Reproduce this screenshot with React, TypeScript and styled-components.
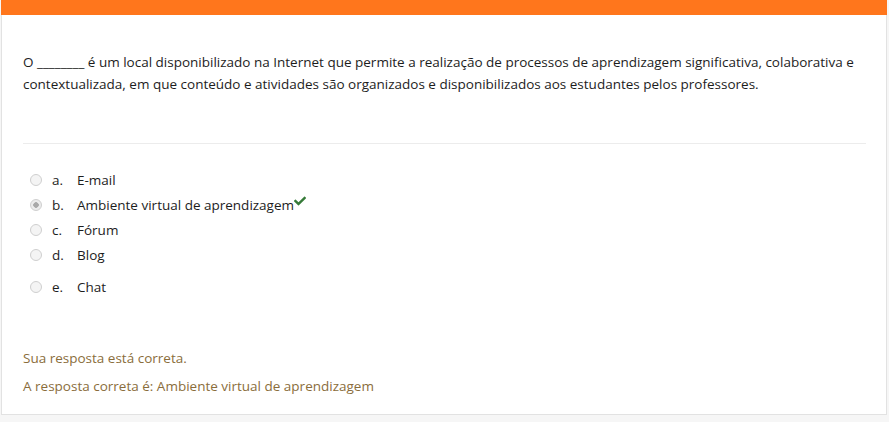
import React from "react";
import styled, { createGlobalStyle } from "styled-components";
import { FaCheck } from "react-icons/fa";

const GlobalStyle = createGlobalStyle`
	body {
		margin: 0;
		background: #f6f6f6;
		font-family: "Open Sans", "Liberation Sans", sans-serif;
		color: #1d1d1d;
	}
`;

interface Option {
	letter: string;
	text: string;
	checked?: boolean;
	correct?: boolean;
}

const options: Option[] = [
	{ letter: "a.", text: "E-mail" },
	{ letter: "b.", text: "Ambiente virtual de aprendizagem", checked: true, correct: true },
	{ letter: "c.", text: "Fórum" },
	{ letter: "d.", text: "Blog" },
	{ letter: "e.", text: "Chat" },
];

export default function App() {
	return (
		<>
			<GlobalStyle />
			<Card>
				<TopBar />
				<Body>
					<Question>
						O ________ é um local disponibilizado na Internet que permite a realização de processos de
						aprendizagem significativa, colaborativa e contextualizada, em que conteúdo e atividades são
						organizados e disponibilizados aos estudantes pelos professores.
					</Question>
					<Divider />
					<Answers>
						{options.map((o, i) => (
							<AnswerRow key={o.letter} $spaced={i === options.length - 1}>
								<Radio $checked={o.checked} />
								<Letter>{o.letter}</Letter>
								<AnswerText>
									{o.text}
									{o.correct && (
										<Tick>
											<FaCheck />
										</Tick>
									)}
								</AnswerText>
							</AnswerRow>
						))}
					</Answers>
					<Feedback>
						<FeedbackLine>Sua resposta está correta.</FeedbackLine>
						<FeedbackLine>A resposta correta é: Ambiente virtual de aprendizagem</FeedbackLine>
					</Feedback>
				</Body>
			</Card>
		</>
	);
}

const Card = styled.div`
	margin: 0 2px 0 1px;
	background: #fff;
	border: 1px solid #e2e2e2;
	border-top: none;
`;

const TopBar = styled.div`
	height: 15px;
	margin: 0 -1px;
	background: #ff761c;
`;

const Body = styled.div`
	padding: 36px 20px 17px 21px;
`;

const Question = styled.p`
	margin: 0;
	font-size: 13.5px;
	line-height: 22px;
`;

const Divider = styled.hr`
	margin: 48px 0 0;
	border: none;
	border-top: 1px solid #ececec;
`;

const Answers = styled.div`
	display: flex;
	flex-direction: column;
	padding-top: 23px;
`;

const AnswerRow = styled.div<{ $spaced?: boolean }>`
	display: flex;
	align-items: center;
	height: 25px;
	margin-top: ${(p) => (p.$spaced ? "7px" : "0")};
	font-size: 13.5px;
`;

const Radio = styled.span<{ $checked?: boolean }>`
	box-sizing: border-box;
	width: 12px;
	height: 12px;
	margin: 0 10px 0 7px;
	border-radius: 50%;
	border: 1px solid #cfcfcf;
	background: ${(p) =>
		p.$checked ? "radial-gradient(circle, #a9a9a9 0 2.5px, #ececec 3px)" : "#f4f4f4"};
`;

const Letter = styled.span`
	width: 25px;
`;

const AnswerText = styled.span`
	position: relative;
`;

const Tick = styled.span`
	display: inline-block;
	vertical-align: top;
	margin-top: -2px;
	font-size: 12px;
	color: #357a38;
`;

const Feedback = styled.div`
	margin-top: 48px;
	display: flex;
	flex-direction: column;
	gap: 6px;
`;

const FeedbackLine = styled.div`
	font-size: 13.5px;
	line-height: 22px;
	color: #8a6d3b;
`;
